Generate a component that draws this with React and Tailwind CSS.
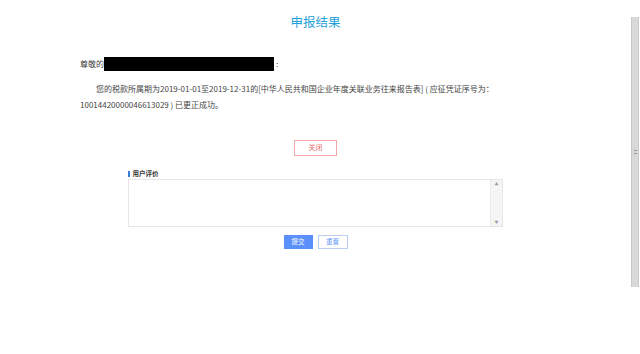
import React from "react";

export default function App() {
  return (
    <div className="w-[640px] h-[354px] bg-white flex overflow-hidden" style={{ fontFamily: '"Noto Sans CJK SC", "Liberation Sans", sans-serif' }}>
      <div className="w-[631px] flex flex-col">
        <h1 className="text-center text-[12.5px] leading-none text-[#1e9fd9] mt-[16px]">申报结果</h1>

        <div className="mx-auto w-[471px] mt-[28px] text-[8px] text-[#444]">
          <div className="flex items-center h-[14px]">
            <span>尊敬的</span>
            <span className="inline-block w-[170px] h-[14px] bg-black" />
            <span className="ml-[2px]">:</span>
          </div>
          <p className="mt-[10px] leading-[16px] indent-[16px]">
            您的税款所属期为2019-01-01至2019-12-31的[中华人民共和国企业年度关联业务往来报告表] ( 应征凭证序号为：10014420000046613029 ) 已更正成功。
          </p>
        </div>

        <div className="flex justify-center mt-[27px]">
          <button className="w-[43px] h-[16px] border border-[#f2a9a9] text-[#e46a6a] text-[7px] leading-none bg-white">关闭</button>
        </div>

        <div className="mx-auto w-[375px] mt-[15px]">
          <div className="flex items-center h-[7px] text-[6.5px] font-bold text-[#333]">
            <span className="w-[1.5px] h-[6px] bg-[#3a7bd5] mr-[3px]" />
            <span>用户评价</span>
          </div>
          <div className="mt-[1px] h-[48px] border border-[#e6e6e6] flex">
            <div className="flex-1" />
            <div className="w-[12px] border-l border-[#ececec] bg-[#f5f5f5] flex flex-col justify-between items-center py-[2px] text-[4px] text-[#999] leading-none">
              <span>▲</span>
              <span>▼</span>
            </div>
          </div>
        </div>

        <div className="flex justify-center gap-[5px] mt-[8px]">
          <button className="w-[29px] h-[14px] bg-[#5b8ff9] text-white text-[6.5px] leading-none">提交</button>
          <button className="w-[30px] h-[14px] bg-white border border-[#b9cdf5] text-[#5b8ff9] text-[6.5px] leading-none">重置</button>
        </div>
      </div>

      <div className="w-[9px] flex flex-col">
        <div className="mt-[17px] h-[270px] w-[8px] bg-[#d9d9d9] border-x border-[#c8c8c8] flex items-center justify-center">
          <span className="w-[3px] h-[4px] border-y border-[#999]" />
        </div>
      </div>
    </div>
  );
}
